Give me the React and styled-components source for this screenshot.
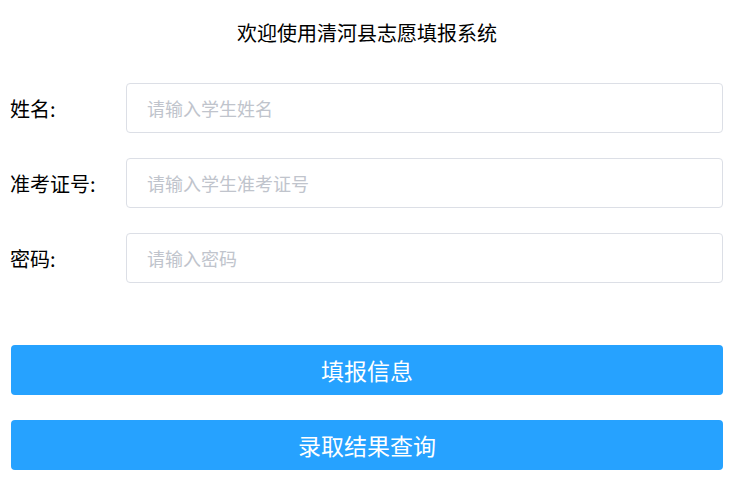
import React, { useState } from "react";
import styled, { createGlobalStyle } from "styled-components";

const GlobalStyle = createGlobalStyle`
  body {
    margin: 0;
    background: #fff;
    font-family: "Noto Sans CJK SC", "Noto Sans", sans-serif;
    color: #000;
  }
  * {
    box-sizing: border-box;
  }
`;

const Page = styled.div`
  width: 735px;
  padding: 0 12px 0 11px;
`;

const Title = styled.h1`
  margin: 0;
  height: 66px;
  line-height: 66px;
  font-size: 20px;
  font-weight: 400;
  text-align: center;
`;

const Form = styled.div`
  display: flex;
  flex-direction: column;
  gap: 25px;
  padding-top: 17px;
`;

const Row = styled.label`
  display: flex;
  align-items: center;
  height: 50px;
`;

const Label = styled.span`
  width: 116px;
  flex-shrink: 0;
  font-size: 20px;
  margin-left: -1px;
`;

const Input = styled.input`
  flex: 1;
  height: 50px;
  border: 1px solid #dcdfe6;
  border-radius: 4px;
  padding: 0 20px;
  font-size: 18px;
  font-family: inherit;
  color: #333;
  outline: none;
  &::placeholder {
    color: #c0c4cc;
  }
`;

const Actions = styled.div`
  display: flex;
  flex-direction: column;
  gap: 25px;
  margin-top: 62px;
`;

const Button = styled.button`
  height: 50px;
  width: 100%;
  border: none;
  border-radius: 4px;
  background: #26a2ff;
  color: #fff;
  font-size: 23px;
  font-family: inherit;
  cursor: pointer;
`;

const fields = [
  { key: "name", label: "姓名:", placeholder: "请输入学生姓名", type: "text" },
  { key: "number", label: "准考证号:", placeholder: "请输入学生准考证号", type: "text" },
  { key: "password", label: "密码:", placeholder: "请输入密码", type: "password" },
];

export default function App() {
  const [form, setForm] = useState({ name: "", number: "", password: "" });

  const handleChange = (key) => (e) => {
    setForm({ ...form, [key]: e.target.value });
  };

  return (
    <Page>
      <GlobalStyle />
      <Title>欢迎使用清河县志愿填报系统</Title>
      <Form>
        {fields.map((f) => (
          <Row key={f.key}>
            <Label>{f.label}</Label>
            <Input
              type={f.type}
              placeholder={f.placeholder}
              value={form[f.key]}
              onChange={handleChange(f.key)}
            />
          </Row>
        ))}
      </Form>
      <Actions>
        <Button>填报信息</Button>
        <Button>录取结果查询</Button>
      </Actions>
    </Page>
  );
}
